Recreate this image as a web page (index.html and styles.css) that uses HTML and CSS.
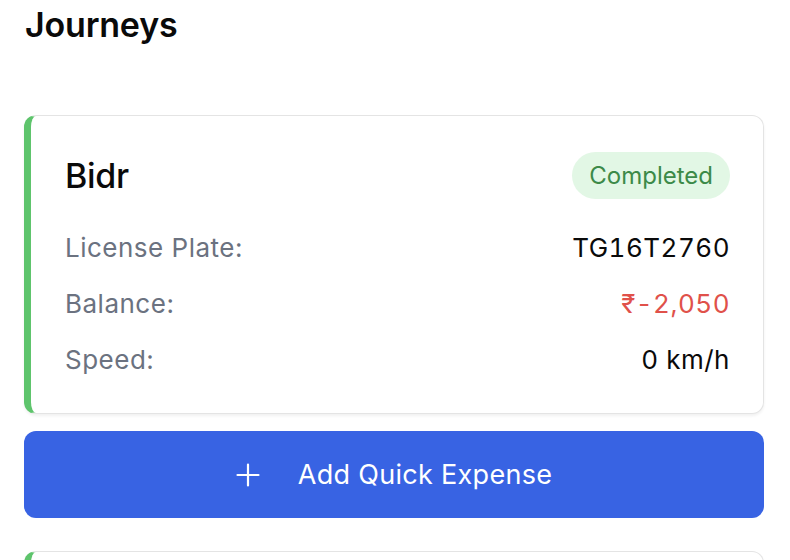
FILE: index.html
```html
<!DOCTYPE html>
<html>
<head>
<meta charset="utf-8">
<link rel="stylesheet" href="styles.css">
</head>
<body>
<div class="page">
  <h1 class="title">Journeys</h1>
  <div class="card">
    <div class="card-head">
      <div class="name">Bidr</div>
      <div class="badge">Completed</div>
    </div>
    <div class="row"><span class="label">License Plate:</span><span class="value">TG16T2760</span></div>
    <div class="row"><span class="label">Balance:</span><span class="value neg">₹-2,050</span></div>
    <div class="row"><span class="label">Speed:</span><span class="value">0 km/h</span></div>
  </div>
  <button class="btn"><svg class="plus" width="24" height="24" viewBox="0 0 24 24"><path d="M12 1.5v21M1.5 12h21" stroke="#fff" stroke-width="2.2" stroke-linecap="round" fill="none"/></svg><span>Add Quick Expense</span></button>
  <div class="card next"></div>
</div>
</body>
</html>
```
FILE: styles.css
```css
html, body {
  margin: 0;
  padding: 0;
  background: #fff;
  overflow: hidden;
}
.page {
  padding: 0 26px 0 24px;
  font-family: Inter, "Noto Sans", sans-serif;
  color: #0a0a0a;
}
.title {
  margin: 0 0 0 1px;
  padding-top: 5px;
  font-size: 34px;
  font-weight: 600;
  line-height: 40px;
  letter-spacing: -0.2px;
}
.card {
  margin-top: 70px;
  border: 1px solid #e4e4e4;
  border-left: 7px solid #5ec46c;
  border-radius: 12px;
  box-shadow: 0 2px 3px rgba(0,0,0,0.06);
  padding: 36px 33px 26px 34px;
  background: #fff;
}
.card-head {
  display: flex;
  justify-content: space-between;
  align-items: center;
  margin-bottom: 20px;
}
.name {
  font-size: 34px;
  font-weight: 500;
  line-height: 40px;
  letter-spacing: -0.3px;
}
.badge {
  background: #e2f7e5;
  color: #3c8a48;
  font-size: 24px;
  line-height: 47px;
  padding: 0 17px;
  border-radius: 24px;
}
.row {
  display: flex;
  justify-content: space-between;
  align-items: center;
  height: 56px;
  font-size: 26px;
  letter-spacing: 0.5px;
}
.label {
  color: #6b7280;
}
.value {
  color: #0a0a0a;
  font-variant-numeric: tabular-nums;
}
.value.neg {
  color: #e0514a;
}
.btn {
  margin-top: 17px;
  width: 100%;
  height: 87px;
  border: none;
  border-radius: 12px;
  background: #3863e3;
  color: #fff;
  font-family: Inter, "Noto Sans", sans-serif;
  font-size: 27px;
  letter-spacing: 0.3px;
  display: flex;
  align-items: center;
  justify-content: center;
  gap: 37px;
  padding: 0;
}
.plus {
  margin-right: 1px;
}
.next {
  margin-top: 33px;
  height: 60px;
  padding: 0;
}
```
